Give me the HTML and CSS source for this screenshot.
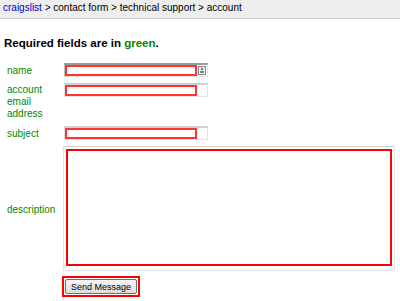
FILE: index.html
```html
<!DOCTYPE html>
<html>
<head>
    <title>craigslist | contact form</title>
    <meta charset="UTF-8">
    <link rel="stylesheet" href="styles.css">
</head>
<body>
    <div class="crumbs"><a href="#">craigslist</a> &gt; contact form &gt; technical support &gt; account</div>

    <h1 class="title">Required fields are in <span class="req">green</span>.</h1>

    <form class="form">
        <label class="label" for="name">name</label>
        <span class="field field-focus">
            <input id="name" type="text">
            <svg class="card" width="8" height="9" viewBox="0 0 8 9">
                <rect x="0.5" y="0.5" width="7" height="8" fill="#eee" stroke="#8a8a8a"/>
                <circle cx="4" cy="3" r="1.2" fill="#777"/>
                <rect x="2.2" y="5" width="3.6" height="2" fill="#777"/>
            </svg>
        </span>

        <label class="label label-top" for="email">account<br>email<br>address</label>
        <span class="field"><input id="email" type="text"></span>

        <label class="label" for="subject">subject</label>
        <span class="field"><input id="subject" type="text"></span>

        <label class="label" for="desc">description</label>
        <span class="area"><textarea id="desc"></textarea></span>

        <span class="send"><button type="button">Send Message</button></span>
    </form>
</body>
</html>
```

FILE: styles.css
```css
body {
    margin: 0;
    font-family: "Liberation Sans", Arial, sans-serif;
    color: #000;
    background-color: #fff;
}
.crumbs {
    background-color: #eee;
    border-bottom: 1px solid #ccc;
    padding: 2px 3px 4px;
    font-size: 10px;
    line-height: 12px;
}
.crumbs a {
    color: #00c;
    text-decoration: none;
}
.title {
    font-size: 11.5px;
    font-weight: bold;
    line-height: 14px;
    margin: 17px 4px 0;
}
.req {
    color: #080;
}
.form {
    display: grid;
    grid-template-columns: 57px auto;
    justify-content: start;
    row-gap: 6px;
    margin-top: 13px;
    padding-left: 7px;
    font-size: 10px;
    line-height: 12px;
}
.label {
    color: #080;
    align-self: center;
    padding-top: 2px;
}
.label-top {
    align-self: start;
    padding-top: 1px;
    padding-bottom: 0;
}
.field {
    display: flex;
    align-self: start;
    justify-self: start;
    width: 142px;
    border: 1px solid #e2e2e2;
    border-top: 2px solid #d0d0d0;
}
.field-focus {
    border-top-color: #999;
    border-left-color: #bbb;
}
.field input {
    box-sizing: border-box;
    width: 132px;
    height: 11px;
    margin: 0;
    padding: 0;
    border: 2px solid #f33;
    font-size: 10px;
    outline: none;
}
.card {
    margin: 1px 0 0 1px;
}
.area {
    display: block;
    justify-self: start;
    margin-left: -1px;
    padding: 2px 2px 4px;
    border: 1px solid #e2e2e2;
    border-top-color: #d0d0d0;
    /* small dotted grip in the corner */
    background-image: radial-gradient(circle, #bbb 0.6px, transparent 0.8px);
    background-size: 2px 2px;
    background-position: right 1px bottom 1px;
    background-repeat: no-repeat;
}
.area textarea {
    display: block;
    box-sizing: border-box;
    width: 326px;
    height: 117px;
    margin: 0;
    padding: 0;
    border: 2px solid #f00;
    outline: none;
    resize: none;
}
.send {
    grid-column: 2;
    justify-self: start;
    display: flex;
    margin: -1px 0 0 -2px;
    padding: 1px;
    border: 2px solid #f00;
}
.send button {
    width: 72px;
    height: 15px;
    padding: 0;
    border: 1px solid #707070;
    border-radius: 2px;
    background: linear-gradient(#f7f7f7, #dcdcdc);
    font-family: "Liberation Sans", Arial, sans-serif;
    font-size: 9px;
    color: #000;
}
```
